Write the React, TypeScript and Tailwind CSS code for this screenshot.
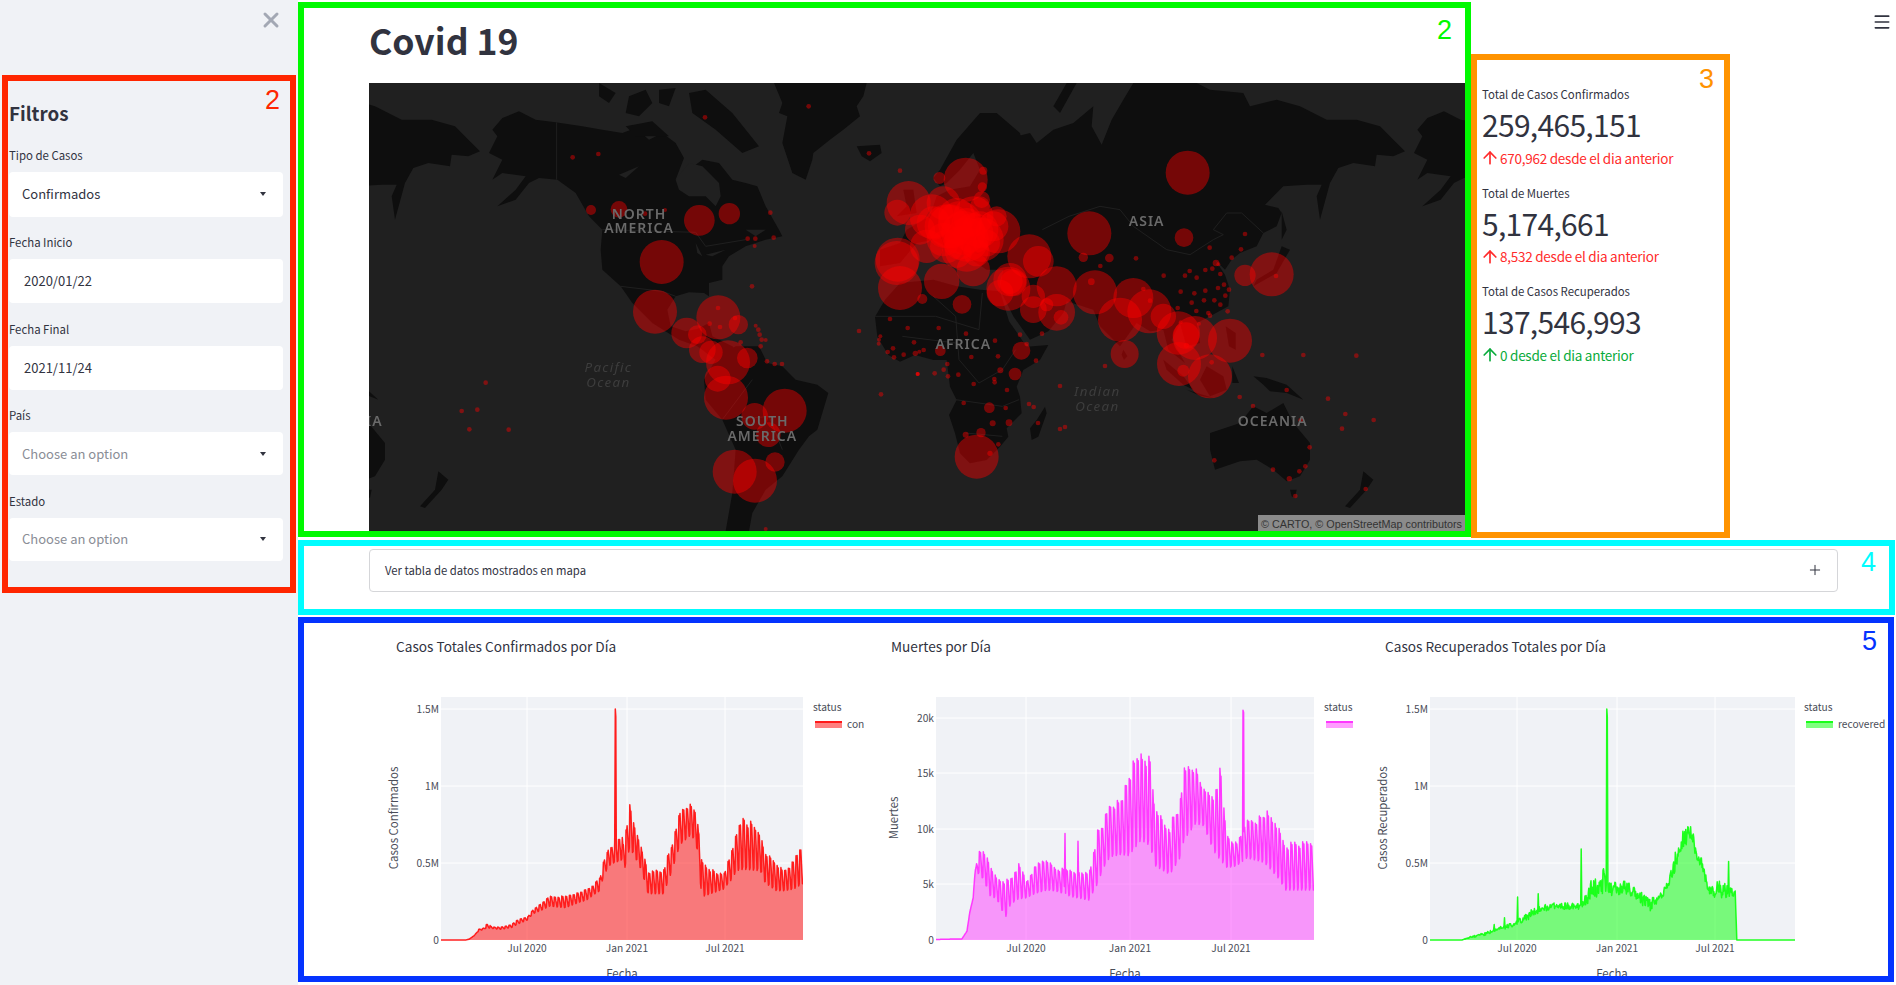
import { ArrowUp, Menu, Plus, X } from "lucide-react";

type Circle = [number, number, number];
type Env = [number, number, number?];

const LAND = [
  "M370,140L400,105L450,85L500,110L560,118L640,130L700,140L760,150L800,135L840,170L880,150L920,180L945,225L920,290L1000,230L1050,240L1090,290L1130,300L1165,310L1190,370L1230,440L1240,460L1190,470L1130,490L1080,520L1060,550L1060,590L1020,600L1020,640L1005,630L960,628L920,640L895,680L905,730L950,745L985,738L1020,720L1030,760L1090,790L1100,800L1040,830L985,790L930,770L850,720L790,660L755,610L700,560L695,500L700,440L660,400L620,330L565,290L510,285L480,300L440,350L385,370L440,320L470,280L400,270L370,290L400,230L360,210L385,160Z",
  "M960,30L1010,20L1090,90L1170,190L1120,210L1040,140L970,90Z",
  "M870,20L920,15L900,70L870,60Z",
  "M690,0L740,30L720,60L690,40Z",
  "M780,40L830,20L850,60L810,100L770,90Z",
  "M770,130L850,115L900,160L800,160Z",
  "M1040,830L1100,790L1170,790L1195,840L1240,850L1280,890L1345,905L1378,930L1345,1040L1320,1060L1290,1100L1240,1180L1190,1220L1150,1290L1140,1344L1070,1344L1090,1230L1100,1100L1060,1010L1010,950L1005,890Z",
  "M1215,0L1240,60L1230,90L1255,100L1240,180L1270,270L1310,290L1330,230L1333,210L1383,170L1423,140L1473,100L1463,70L1483,40L1493,0Z",
  "M1463,190L1533,185L1538,210L1503,235L1478,220Z",
  "M1603,320L1633,320L1643,390L1583,400L1613,370Z",
  "M1693,285L1713,260L1763,170L1833,90L1883,90L1953,150L1958,175L1913,190L1883,175L1983,150L2003,180L2053,140L2113,120L2173,70L2168,130L2198,185L2228,110L2263,50L2293,0L2483,0L2523,20L2623,30L2643,70L2723,50L2793,70L2873,110L2963,110L3033,130L3083,180L3108,205L3073,220L3023,215L3018,250L2953,240L2908,255L2883,300L2853,410L2843,340L2858,305L2813,305L2743,310L2688,365L2728,375L2738,390L2723,430L2683,450L2663,490L2613,510L2588,530L2568,560L2538,530L2568,575L2583,620L2578,670L2523,700L2483,720L2493,780L2453,790L2433,720L2408,770L2448,840L2398,800L2383,740L2343,745L2303,720L2253,790L2193,730L2173,680L2093,655L2083,690L2038,745L1983,770L1933,700L1893,620L1903,560L1853,560L1793,520L1693,470L1643,480L1593,540L1533,550L1533,500L1593,480L1613,440L1683,400L1703,340L1743,320L1803,310L1833,260L1813,210L1773,260L1733,300L1713,310Z",
  "M2053,70L2093,0L2123,0L2073,90Z",
  "M1548,650L1593,600L1693,590L1763,610L1833,620L1893,625L1920,715L1973,791L2038,786L2013,831L1963,861L1943,911L1953,941L1958,991L1913,1036L1918,1061L1893,1091L1853,1131L1803,1141L1773,1111L1758,1051L1740,996L1763,951L1743,911L1733,831L1693,831L1638,816L1593,836L1558,816L1525,761L1518,701Z",
  "M2028,971L2033,991L2008,1061L1988,1071L1983,1036L2003,1011Z",
  "M2523,1050L2613,1020L2653,970L2693,990L2743,960L2773,1020L2823,1080L2823,1130L2793,1180L2753,1195L2713,1160L2663,1130L2613,1135L2538,1160L2523,1100Z",
  "M2763,1220L2783,1220L2778,1245L2768,1240Z",
  "M2983,1165L3013,1190L2993,1220L2943,1275L2928,1270L2973,1220Z",
  "M2653,880L2693,885L2753,905L2803,950L2753,930L2703,925L2683,905Z",
  "M2383,830L2443,880L2473,920L2443,905L2393,860Z",
  "M2513,850L2563,880L2573,920L2523,940L2493,890Z",
  "M2453,920L2533,945L2493,938Z",
  "M2590,850L2610,900L2590,900Z",
  "M2570,730L2600,750L2600,800L2580,790Z",
  "M2738,490L2763,500L2723,570L2653,610L2663,590L2713,560Z",
  "M2738,385L2753,440L2738,470L2738,420Z",
  "M2263,800L2275,820L2265,830L2258,815Z",
];

const WATER = [
  "M920,290L960,240L1000,250L1050,300L1055,340L1040,370L1010,340L960,340L930,320Z",
  "M750,275L810,250L770,285Z",
  "M980,480L1000,520L985,510Z",
  "M1010,515L1070,500L1030,520Z",
  "M1130,440L1190,440L1160,460Z",
];

const BORDERS = [
  "M563,118L563,290",
  "M700,440L980,448L1010,490L1130,470",
  "M755,610L880,625L920,640",
  "M1518,700L1700,700L1830,740L1840,630",
  "M1693,640L1760,700L1770,830",
  "M1600,760L1760,780",
  "M1770,830L1830,900L1900,860L1940,800",
  "M1760,950L1900,970L1950,950",
  "M1790,1050L1900,1060",
  "M2293,430L2393,500L2463,515L2533,470L2563,455L2533,440L2573,390L2618,390L2683,450",
  "M2293,430L2253,380L2193,370L2100,400L2020,440",
  "M1100,1010L1200,1000L1240,1100",
  "M1150,890L1060,1010",
];

const circlesWest: Circle[] = [
  [666, 381, 15], [750, 379, 25], [828, 392, 7], [888, 381, 6], [991, 412, 46], [1081, 392, 32], [1204, 389, 7],
  [1136, 467, 7], [1159, 467, 7], [1214, 464, 7], [1157, 489, 6], [878, 537, 66], [1149, 610, 7], [858, 686, 66],
  [1048, 703, 66], [1047, 675, 7], [1022, 722, 7], [1053, 732, 7], [953, 750, 46], [985, 755, 28], [1108, 725, 29],
  [1098, 705, 7], [1160, 728, 6], [1168, 740, 7], [1172, 755, 7], [1178, 770, 7], [1190, 771, 6], [1175, 790, 7],
  [1115, 778, 7], [1000, 800, 40], [1026, 808, 35], [1077, 838, 66], [1135, 825, 31], [1046, 887, 39], [1071, 944, 66],
  [1194, 835, 7], [1217, 843, 7], [1239, 843, 7], [1157, 1000, 40], [1247, 983, 66], [1198, 1055, 37], [1218, 1137, 29],
  [1097, 1166, 66], [1158, 1193, 66], [1190, 1338, 6], [1319, 70, 7], [1008, 103, 7], [611, 223, 7], [688, 213, 7],
  [350, 899, 7], [325, 980, 7], [278, 984, 7], [301, 1039, 7], [419, 1040, 7],
];

// x is relative to 1293
const circlesMiddle: Circle[] = [
  [207, 211, 7], [300, 263, 7], [418, 285, 18], [497, 290, 66], [550, 263, 12], [547, 312, 14], [326, 360, 66], [292, 389, 39],
  [430, 360, 50], [395, 400, 66], [440, 430, 66], [490, 450, 66], [480, 420, 66], [520, 400, 60], [545, 350, 25], [540, 370, 30],
  [590, 400, 30], [595, 445, 66], [545, 470, 66], [500, 500, 66], [440, 490, 50], [380, 490, 50], [290, 540, 66], [293, 530, 66],
  [450, 430, 66], [500, 470, 66], [470, 400, 55], [520, 450, 60], [430, 470, 50], [480, 480, 50], [500, 420, 45], [540, 440, 55],
  [400, 420, 50], [560, 480, 40], [360, 440, 45], [580, 430, 45], [470, 510, 45], [530, 510, 40],
  [300, 615, 66], [425, 595, 53], [520, 560, 50], [367, 648, 15], [486, 664, 28], [868, 451, 66], [850, 523, 14], [928, 525, 13],
  [901, 549, 7], [1008, 526, 7], [688, 520, 66], [715, 535, 46], [770, 610, 60], [630, 590, 50], [625, 617, 66], [640, 600, 40],
  [630, 595, 38], [600, 630, 40],
  [700, 640, 35], [700, 680, 40], [770, 688, 55], [740, 665, 20], [783, 703, 22], [885, 628, 66], [874, 596, 10], [960, 710, 66],
  [974, 813, 42], [915, 849, 7], [177, 744, 7], [270, 708, 7], [323, 735, 7], [416, 735, 7], [498, 752, 7], [585, 773, 7],
  [660, 755, 7], [726, 752, 7], [664, 803, 27], [680, 783, 7], [708, 833, 7], [241, 760, 6], [237, 770, 6], [236, 782, 6],
  [279, 796, 7], [263, 807, 7], [282, 823, 7], [311, 815, 7], [342, 778, 7], [346, 811, 8], [358, 806, 6], [371, 801, 7],
  [421, 803, 16], [442, 843, 7], [431, 860, 7], [444, 880, 7], [475, 875, 7], [514, 822, 7], [594, 820, 7], [601, 862, 9],
  [645, 873, 19], [583, 888, 7], [584, 898, 7], [521, 903, 7], [621, 921, 7], [491, 960, 7], [568, 974, 16], [617, 975, 7],
  [578, 1021, 9], [627, 1019, 10], [687, 963, 7], [701, 972, 7], [714, 1020, 7], [780, 1038, 7], [795, 1032, 7], [780, 909, 7],
  [353, 873, 6], [353, 873, 6], [353, 873, 6], [404, 871, 7], [243, 934, 7], [543, 1049, 14], [497, 1055, 9], [530, 1121, 66],
  [570, 1111, 8], [595, 1084, 7],
];

// x is relative to 2193
const circlesEast: Circle[] = [
  [263, 269, 66], [252, 464, 28], [435, 453, 7], [329, 494, 7], [423, 499, 7], [395, 524, 7], [191, 578, 7], [255, 578, 7],
  [269, 564, 7], [290, 584, 7], [316, 561, 7], [337, 557, 7], [348, 540, 10], [355, 544, 6], [361, 573, 7], [242, 626, 7],
  [283, 631, 7], [316, 623, 7], [354, 615, 7], [372, 605, 7], [387, 620, 7], [376, 638, 7], [275, 659, 7], [312, 652, 7],
  [343, 652, 7], [361, 665, 7], [289, 684, 7], [233, 675, 7], [325, 690, 7], [330, 698, 7], [383, 685, 7], [435, 577, 32],
  [515, 574, 66], [528, 579, 7], [100, 645, 60], [148, 685, 66], [150, 653, 7], [190, 700, 38], [130, 618, 7], [235, 750, 65],
  [258, 758, 40], [285, 765, 66], [390, 773, 66], [242, 718, 6], [297, 722, 6], [259, 787, 8], [237, 843, 66], [330, 880, 66],
  [250, 863, 18], [335, 838, 7], [487, 816, 7], [610, 816, 7], [769, 818, 7], [560, 921, 7], [419, 942, 7], [459, 969, 7],
  [684, 947, 7], [736, 993, 7], [821, 1011, 7], [726, 1037, 7], [602, 1012, 7], [629, 1093, 7], [343, 1132, 7], [519, 1160, 7],
  [598, 1165, 7], [616, 1150, 7], [568, 1187, 8], [586, 1239, 7], [797, 1218, 7],
];

const allCircles: Circle[] = [
  ...circlesWest,
  ...circlesMiddle.map(([x, y, r]): Circle => [x + 1293, y, r]),
  ...circlesEast.map(([x, y, r]): Circle => [x + 2193, y, r]),
];

function WorldMap() {
  const continent = "fill-[#6a6a6a] text-[42px] font-semibold tracking-[3px]";
  const ocean = "fill-[#3d3d3d] text-[40px] italic tracking-[4px]";
  return (
    <div className="relative h-[448px] w-full overflow-hidden bg-[#202020]">
      <svg viewBox="0 0 3288 1344" className="h-full w-full blur-[0.4px] font-['Noto_Sans',sans-serif]">
        {[-2775, 0, 2775].map((dx) => (
          <g key={dx} transform={`translate(${dx} 0)`}>
            {LAND.map((d, i) => <path key={i} d={d} fill="#0e0e0e" />)}
            {WATER.map((d, i) => <path key={i} d={d} fill="#202020" />)}
            {BORDERS.map((d, i) => <path key={i} d={d} fill="none" stroke="#1f1f1f" strokeWidth="3" />)}
          </g>
        ))}
        {allCircles.map(([x, y, r], i) => <circle key={i} cx={x} cy={y} r={r} fill="rgba(255,0,0,0.43)" />)}
        <g textAnchor="middle" className={continent}>
          <text x="810" y="407">NORTH</text>
          <text x="810" y="451">AMERICA</text>
          <text x="1180" y="1029">SOUTH</text>
          <text x="1180" y="1075">AMERICA</text>
          <text x="1783" y="798">AFRICA</text>
          <text x="2333" y="428">ASIA</text>
          <text x="2711" y="1030">OCEANIA</text>
          <text x="-64" y="1030">OCEANIA</text>
        </g>
        <g textAnchor="middle" className={ocean}>
          <text x="718" y="868">Pacific</text>
          <text x="718" y="911">Ocean</text>
          <text x="2185" y="940">Indian</text>
          <text x="2185" y="983">Ocean</text>
        </g>
      </svg>
      <div className="absolute bottom-0 right-0 flex h-[16px] w-[207px] items-center justify-center bg-[#8b8b8b] pt-[2px] font-['Liberation_Sans',sans-serif] text-[10.8px] text-[#333]">
        © CARTO, © OpenStreetMap contributors
      </div>
    </div>
  );
}

function lerpEnv(env: Env[], day: number) {
  for (let i = 0; i < env.length - 1; i++) {
    const a = env[i];
    const b = env[i + 1];
    if (day >= a[0] && day <= b[0]) {
      const t = b[0] === a[0] ? 0 : (day - a[0]) / (b[0] - a[0]);
      return a[1] + (b[1] - a[1]) * t;
    }
  }
  return env[env.length - 1][1];
}

// envelope rows are [day, high, low]
function buildSeries(rows: number[][], spikes: Record<number, number>, weekly: boolean) {
  const hi: Env[] = rows.map((r) => [r[0], r[1]]);
  const lo: Env[] = rows.map((r) => [r[0], r.length > 2 ? r[2] : r[1]]);
  const week = [1, 0.85, 0.95, 0.6, 0.3, 0, 0.05];
  const out: number[] = [];
  let seed = 17;
  let weekScale = 1;
  for (let d = 0; d < 672; d++) {
    seed = (seed * 1103 + 12345) % 65536;
    const noise = seed / 65536;
    if (d % 7 === 0) weekScale = 0.82 + noise * 0.18;
    const h = lerpEnv(hi, d);
    const l = lerpEnv(lo, d);
    const f = weekly ? week[d % 7] * weekScale : noise;
    out.push(spikes[d] ?? l + (h - l) * f);
  }
  return out;
}

const confirmed = buildSeries(
  [[0, 0], [45, 0], [52, 0.005], [62, 0.03], [70, 0.07, 0.06], [80, 0.08, 0.07], [85, 0.11, 0.08], [95, 0.085, 0.075], [110, 0.085, 0.07], [130, 0.1, 0.08], [140, 0.13, 0.1], [160, 0.15, 0.13], [170, 0.2, 0.17], [190, 0.25, 0.2], [200, 0.29, 0.22], [230, 0.29, 0.21], [260, 0.32, 0.25], [270, 0.34, 0.26], [285, 0.37, 0.3], [295, 0.42, 0.32], [300, 0.5, 0.4], [310, 0.6, 0.48], [320, 0.64, 0.5], [335, 0.7, 0.52], [338, 0.65, 0.43], [350, 0.89, 0.6], [358, 0.77, 0.55], [372, 0.62, 0.45], [384, 0.45, 0.3], [412, 0.47, 0.3], [425, 0.6, 0.42], [443, 0.84, 0.62], [462, 0.9, 0.68], [471, 0.87, 0.65], [477, 0.75, 0.55], [483, 0.55, 0.28], [499, 0.47, 0.3], [523, 0.43, 0.33], [536, 0.55, 0.38], [548, 0.7, 0.45], [561, 0.82, 0.46], [592, 0.73, 0.45], [601, 0.58, 0.37], [622, 0.52, 0.32], [635, 0.45, 0.32], [653, 0.52, 0.33], [672, 0.65, 0.37]],
  { 323: 1.5, 324: 1.45 },
  true,
);

const deaths = buildSeries(
  [[0, 0.05], [46, 0.1], [55, 0.8], [60, 2.5], [66, 3.8], [69, 6, 5.9], [76, 8.3, 6], [85, 8.5, 5.4], [96, 7, 4], [108, 5.8, 3.7], [123, 5.6, 2], [132, 5.7, 3.2], [146, 7, 3.7], [161, 5.5, 3.8], [176, 7, 4.2], [197, 7.4, 4.5], [214, 6.7, 4.4], [241, 6.5, 3.9], [271, 6.3, 3.6], [286, 10, 5], [297, 11, 6.5], [309, 12.7, 7.5], [327, 13, 7.7], [342, 15.6, 7.6], [364, 18, 9], [380, 17, 8.5], [389, 12, 6.7], [415, 10.5, 5.9], [433, 12.8, 7.4], [440, 15.7, 9], [461, 16, 10.5], [475, 14, 10.3], [493, 13.5, 8], [505, 16, 7.2], [517, 9.5, 6.5], [534, 8.8, 6.7], [552, 10.8, 7.4], [582, 11.5, 7], [588, 12.5, 6.7], [609, 10.3, 5.5], [620, 9, 4.5], [672, 9, 4.5]],
  { 229: 9.6, 252: 8.9, 545: 20.7, 546: 20.5 },
  true,
);

const recovered = buildSeries(
  [[0, 0], [59, 0], [75, 0.025, 0.015], [100, 0.05, 0.03], [118, 0.07, 0.05], [137, 0.1, 0.07], [155, 0.11, 0.09], [180, 0.19, 0.13], [199, 0.22, 0.17], [223, 0.24, 0.2], [260, 0.25, 0.19], [276, 0.23, 0.2], [291, 0.33, 0.24], [300, 0.43, 0.25], [316, 0.48, 0.3], [335, 0.38, 0.28], [360, 0.39, 0.3], [378, 0.34, 0.27], [403, 0.27, 0.18], [421, 0.29, 0.25], [437, 0.38, 0.32], [446, 0.5, 0.38], [458, 0.68, 0.55], [477, 0.75, 0.65], [492, 0.65, 0.5], [502, 0.5, 0.42], [514, 0.35, 0.28], [532, 0.4, 0.27], [560, 0.32, 0.28], [561, 0.32, 0.28], [564, 0, 0], [672, 0, 0]],
  { 118: 0.1, 137: 0.145, 161: 0.28, 199: 0.3, 278: 0.59, 325: 1.5, 326: 1.45, 549: 0.51 },
  false,
);

interface ChartProps {
  id: string;
  viewX: number;
  viewW: number;
  left: number;
  right: number;
  series: number[];
  maxY: number;
  yTicks: [string, number][];
  xTicks: number[];
  yTitle: string;
  yTitleX: number;
  fechaX: number;
  legendX: number;
  legendName: string;
  line: string;
  fill: string;
}

const xLabels = ["Jul 2020", "Jan 2021", "Jul 2021"];

function AreaChart(p: ChartProps) {
  const top = 696;
  const bottom = 939;
  const tick = "fill-[#4a4d58] text-[10.2px]";
  const axis = "fill-[#4a4d58] text-[11.4px]";
  const sx = (d: number) => p.left + ((p.right - p.left) * d) / 671;
  const sy = (v: number) => bottom - v * p.maxY;
  const linePts = p.series.map((v, d) => `${sx(d).toFixed(1)},${sy(v).toFixed(1)}`).join(" ");
  const sw = p.legendX;
  return (
    <svg viewBox={`${p.viewX} 660 ${p.viewW} 315`} className="block h-[315px] w-full font-['Noto_Sans_CJK_SC',sans-serif]">
      <rect x={p.left} y={top} width={p.right - p.left} height={bottom - top} fill="#f0f2f6" />
      {p.xTicks.map((x) => <line key={x} x1={x} x2={x} y1={top} y2={bottom} stroke="#fff" />)}
      {p.yTicks.map(([label, y]) => <line key={label} x1={p.left} x2={p.right} y1={y} y2={y} stroke="#fff" />)}
      <clipPath id={p.id}>
        <rect x={p.left} y={top} width={p.right - p.left} height={bottom - top + 1} />
      </clipPath>
      <g clipPath={`url(#${p.id})`}>
        <polygon points={`${p.left},${bottom} ${linePts} ${p.right},${bottom}`} fill={p.fill} />
        <polyline points={linePts} fill="none" stroke={p.line} strokeWidth="1.5" strokeLinejoin="round" />
      </g>
      {p.yTicks.map(([label, y]) => (
        <text key={label} x={p.left - 2} y={y + 4} textAnchor="end" className={tick}>{label}</text>
      ))}
      {p.xTicks.map((x, i) => (
        <text key={x} x={x} y={951} textAnchor="middle" className={tick}>{xLabels[i]}</text>
      ))}
      <text x={p.fechaX} y={977} textAnchor="middle" className={axis}>Fecha</text>
      <text x={p.yTitleX} y={817} textAnchor="middle" transform={`rotate(-90 ${p.yTitleX} 817)`} className={axis}>{p.yTitle}</text>
      <text x={sw - 2} y={710} className={tick}>status</text>
      <rect x={sw} y={720} width={27} height={7} fill={p.fill} />
      <line x1={sw} x2={sw + 27} y1={721} y2={721} stroke={p.line} strokeWidth="2" />
      <text x={sw + 32} y={727} className={tick}>{p.legendName}</text>
    </svg>
  );
}

function Caret() {
  return <span className="h-0 w-0 border-x-[3.5px] border-t-[4px] border-x-transparent border-t-[#31333f]" />;
}

function Field({ label, value, height, placeholder, select }: { label: string; value: string; height: string; placeholder?: boolean; select?: boolean }) {
  return (
    <div className="flex flex-col gap-[9px]">
      <div className="h-[16px] text-[11.4px] leading-[16px] text-[#31333f]">{label}</div>
      <div className={`flex items-center justify-between rounded-[4px] bg-white ${height} ${select ? "pl-[13px] pr-[17px]" : "pl-[15px]"} text-[13px] ${placeholder ? "text-[#8a8d96]" : "text-[#31333f]"}`}>
        <span>{value}</span>
        {select && <Caret />}
      </div>
    </div>
  );
}

function Sidebar() {
  return (
    <aside className="h-full w-[298px] shrink-0 bg-[#f0f2f6]">
      <div className="flex h-[75px] justify-end pr-[15px] pt-[8px]">
        <X size={24} strokeWidth={3} className="text-[#a3a8b4]" />
      </div>
      <div className="relative ml-[2px] h-[518px] w-[294px] border-[6px] border-[#ff2600] pl-[1px] pr-[7px]">
        <span className="absolute right-[10px] top-[6px] font-['Liberation_Sans',sans-serif] text-[27px] leading-none text-[#ff2600]">2</span>
        <h2 className="h-[58px] pt-[18px] text-[18.8px] font-bold leading-[28px] text-[#31333f]">Filtros</h2>
        <div className="mt-[7.5px] flex flex-col gap-[17.5px]">
          <Field label="Tipo de Casos" value="Confirmados" height="h-[45px]" select />
          <Field label="Fecha Inicio" value="2020/01/22" height="h-[44px]" />
          <Field label="Fecha Final" value="2021/11/24" height="h-[44px]" />
          <Field label="País" value="Choose an option" height="h-[43px]" placeholder select />
          <Field label="Estado" value="Choose an option" height="h-[43px]" placeholder select />
        </div>
      </div>
    </aside>
  );
}

function Metric({ label, value, delta, color }: { label: string; value: string; delta: string; color: string }) {
  return (
    <div>
      <div className="flex h-[18px] items-center text-[11.4px] text-[#31333f]">{label}</div>
      <div className="flex h-[44px] items-center pb-[3px] text-[30px] tracking-[-0.7px] text-[#31333f]">{value}</div>
      <div className={`-ml-[2px] flex h-[20px] items-center text-[13.5px] tracking-[-0.25px] ${color}`}>
        <ArrowUp size={20} strokeWidth={2} />
        <span>{delta}</span>
      </div>
    </div>
  );
}

export default function App() {
  return (
    <div className="flex h-[985px] w-[1896px] overflow-hidden bg-white font-['Noto_Sans_CJK_SC',sans-serif]">
      <Sidebar />
      <main className="min-w-0 flex-1 pt-[2px]">
        <div className="flex">
          <section className="relative h-[535px] w-[1173px] shrink-0 border-[6px] border-[#00f900] pl-[65px]">
            <span className="absolute right-[13px] top-[9px] font-['Liberation_Sans',sans-serif] text-[27px] leading-none text-[#00f900]">2</span>
            <h1 className="flex h-[75px] items-center pb-[12px] text-[35.6px] font-bold text-[#31333f]">Covid 19</h1>
            <WorldMap />
          </section>
          <section className="relative mt-[52px] h-[484px] w-[259px] shrink-0 border-[6px] border-[#ff9300] pl-[5px] pt-[26px]">
            <span className="absolute right-[10px] top-[6px] font-['Liberation_Sans',sans-serif] text-[27px] leading-none text-[#ff9300]">3</span>
            <div className="flex flex-col gap-[16.5px]">
              <Metric label="Total de Casos Confirmados" value="259,465,151" delta="670,962 desde el dia anterior" color="text-[#ff2b2b]" />
              <Metric label="Total de Muertes" value="5,174,661" delta="8,532 desde el dia anterior" color="text-[#ff2b2b]" />
              <Metric label="Total de Casos Recuperados" value="137,546,993" delta="0 desde el dia anterior" color="text-[#09ab3b]" />
            </div>
          </section>
          <div className="flex flex-1 justify-end pr-[4px] pt-[10px]">
            <Menu size={20} strokeWidth={2} className="text-[#31333f]" />
          </div>
        </div>
        <section className="relative mr-[1px] mt-[2px] h-[75px] border-[6px] border-[#00fdff] pl-[65px] pt-[3px]">
          <span className="absolute right-[13px] top-[3px] font-['Liberation_Sans',sans-serif] text-[27px] leading-none text-[#00fdff]">4</span>
          <div className="flex h-[43px] w-[1469px] items-center justify-between rounded-[4px] border border-[#d5d6d9] pb-px pl-[15px] pr-[14px] text-[11.3px] text-[#31333f]">
            <span>Ver tabla de datos mostrados en mapa</span>
            <Plus size={16} strokeWidth={1.5} />
          </div>
        </section>
        <section className="relative mr-[2px] mt-[2px] h-[365px] border-[6px] border-[#0433ff] pl-[72px]">
          <span className="absolute right-[11px] top-[5px] font-['Liberation_Sans',sans-serif] text-[27px] leading-none text-[#0433ff]">5</span>
          <div className="grid grid-cols-[495px_495px_1fr]">
            <div>
              <h3 className="h-[38px] pl-[20px] pt-[13px] text-[13.65px] leading-[20px] text-[#31333f]">Casos Totales Confirmados por Día</h3>
              <AreaChart id="c1" viewX={376} viewW={495} left={441} right={803} series={confirmed} maxY={154}
                yTicks={[["0", 939], ["0.5M", 862], ["1M", 785], ["1.5M", 708]]} xTicks={[527, 627, 725]}
                yTitle="Casos Confirmados" yTitleX={398} fechaX={622} legendX={815} legendName="con"
                line="rgba(255,20,20,0.95)" fill="rgba(255,0,0,0.5)" />
            </div>
            <div>
              <h3 className="h-[38px] pl-[20px] pt-[13px] text-[13.65px] leading-[20px] text-[#31333f]">Muertes por Día</h3>
              <AreaChart id="c2" viewX={871} viewW={495} left={936} right={1314} series={deaths} maxY={11.1}
                yTicks={[["0", 939], ["5k", 883], ["10k", 828], ["15k", 772], ["20k", 717]]} xTicks={[1026, 1130, 1231]}
                yTitle="Muertes" yTitleX={898} fechaX={1125} legendX={1326} legendName=""
                line="rgba(255,50,255,0.95)" fill="rgba(255,50,255,0.48)" />
            </div>
            <div>
              <h3 className="h-[38px] pl-[19px] pt-[13px] text-[13.65px] leading-[20px] text-[#31333f]">Casos Recuperados Totales por Día</h3>
              <AreaChart id="c3" viewX={1366} viewW={522} left={1430} right={1795} series={recovered} maxY={154}
                yTicks={[["0", 939], ["0.5M", 862], ["1M", 785], ["1.5M", 708]]} xTicks={[1517, 1617, 1715]}
                yTitle="Casos Recuperados" yTitleX={1387} fechaX={1612} legendX={1806} legendName="recovered"
                line="rgba(20,255,20,0.95)" fill="rgba(0,255,0,0.5)" />
            </div>
          </div>
        </section>
      </main>
    </div>
  );
}
